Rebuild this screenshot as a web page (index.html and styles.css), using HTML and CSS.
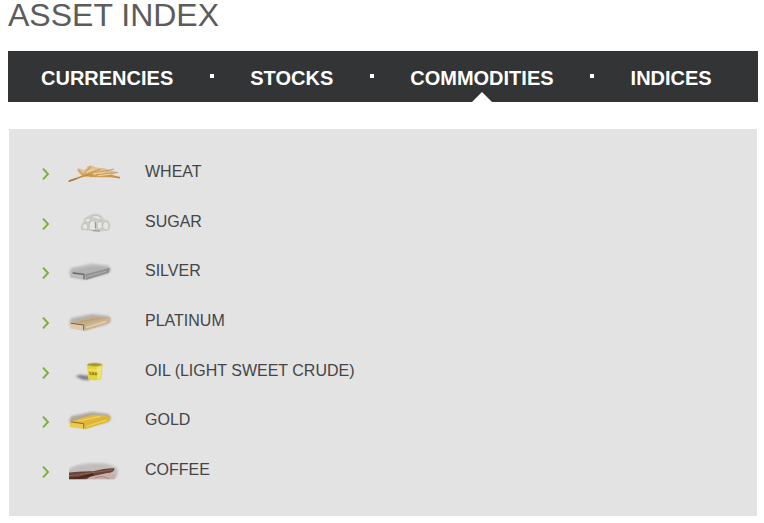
FILE: index.html
```html
<!DOCTYPE html>
<html lang="en">
<head>
<meta charset="utf-8">
<meta name="viewport" content="width=device-width, initial-scale=1">
<title>Asset Index</title>
<link rel="stylesheet" href="styles.css">
</head>
<body>
<svg class="defs" aria-hidden="true">
  <defs>
    <filter id="soft" x="-20%" y="-40%" width="140%" height="180%"><feGaussianBlur stdDeviation="1.8"/></filter>
    <filter id="shadow" x="-20%" y="-40%" width="140%" height="180%"><feGaussianBlur stdDeviation="3.5"/></filter>
    <symbol id="chevron" viewBox="0 0 8 12"><path d="M1 .6L6 6l-5 5.4" fill="none" stroke="#7fb03f" stroke-width="2"/></symbol>
  </defs>
</svg>
<h1 class="title">ASSET INDEX</h1>
<nav class="tabs" aria-label="Asset classes">
  <a class="tab" href="#currencies">CURRENCIES</a>
  <span class="dot"></span>
  <a class="tab" href="#stocks">STOCKS</a>
  <span class="dot"></span>
  <a class="tab tab-active" href="#commodities" aria-current="page">COMMODITIES</a>
  <span class="dot"></span>
  <a class="tab" href="#indices">INDICES</a>
</nav>
<ul class="assets" id="commodities">
  <li class="asset">
    <svg class="chevron"><use href="#chevron"/></svg>
    <svg class="picture" viewBox="114 14 168 72">
      <g filter="url(#soft)" fill="none" stroke-linecap="round">
        <path d="M156 62Q142 52 141 40Q152 38 160 44Q168 42 174 32Q184 28 192 34Q202 38 222 38L236 44L262 50L246 56L266 66L215 66L170 66Z" fill="#dcb984" opacity=".85"/>
        <path d="M118 77L160 62Q200 52 268 67" stroke="#bd8c42" stroke-width="5"/>
        <path d="M160 58L182 34M166 58L210 42M170 58L250 42M174 59L262 52M158 58L146 44M180 63L256 64" stroke="#c8954a" stroke-width="4" opacity=".8"/>
        <path d="M170 50L190 42M190 56L225 51M205 61L240 57" stroke="#ecd3a5" stroke-width="4"/>
        <path d="M118 77L140 70" stroke="#a87845" stroke-width="4"/>
      </g>
    </svg>
    <a class="name" href="#wheat">WHEAT</a>
  </li>
  <li class="asset">
    <svg class="chevron"><use href="#chevron"/></svg>
    <svg class="picture" viewBox="114 13 168 72">
      <g filter="url(#soft)">
        <path d="M153 73Q149 56 160 50Q160 34 174 32Q184 22 202 24Q218 26 222 41Q238 42 241 58Q243 72 232 75L205 78L180 75Z" fill="#cfcecb"/>
        <g fill="#e6e6e4" stroke="#b5b4af" stroke-width="2">
          <path d="M158 70Q154 54 167 54Q176 58 172 72Z"/>
          <path d="M163 48Q168 34 181 38L179 50Z"/>
          <path d="M184 36Q188 27 203 30Q213 34 213 44L197 39Z"/>
          <path d="M178 72Q174 49 188 44Q202 48 196 74Z"/>
          <path d="M201 54Q208 42 217 52L216 69L203 72Z"/>
          <path d="M219 52Q230 42 237 58Q238 68 229 73L218 68Z"/>
        </g>
        <path d="M196 50V67M188 75L210 76" stroke="#8f8e86" stroke-width="3"/>
      </g>
    </svg>
    <a class="name" href="#sugar">SUGAR</a>
  </li>
  <li class="asset">
    <svg class="chevron"><use href="#chevron"/></svg>
    <svg class="picture" viewBox="114 12 168 72">
      <path d="M118 50L124 39L186 26L236 32L244 46L232 57L165 74L122 65Z" fill="#a2a2a2" opacity=".65" filter="url(#shadow)"/>
      <g filter="url(#soft)">
        <path d="M124 52L188 35L238 38L166 58Z" fill="#b2b2b2"/>
        <path d="M122 53L166 58L168 75L120 67Z" fill="#bcbcbc"/>
        <path d="M166 58L240 38L237 53L168 75Z" fill="#919191"/>
        <path d="M128 54L162 58V73" fill="none" stroke="#666" stroke-width="4"/>
        <path d="M170 65L228 49" stroke="#aaa" stroke-width="4"/>
      </g>
    </svg>
    <a class="name" href="#silver">SILVER</a>
  </li>
  <li class="asset">
    <svg class="chevron"><use href="#chevron"/></svg>
    <svg class="picture" viewBox="114 11 168 72">
      <path d="M118 50L124 39L186 26L236 32L244 46L232 57L165 74L122 65Z" fill="#9e9790" opacity=".65" filter="url(#shadow)"/>
      <g filter="url(#soft)">
        <path d="M124 53L188 34L240 36L164 59Z" fill="#c5ac89"/>
        <path d="M121 54L163 59L164 76L120 69Z" fill="#dfcbac"/>
        <path d="M164 59L242 36L238 53L165 76Z" fill="#cdb48d"/>
        <path d="M123 54L161 59V75" fill="none" stroke="#79613d" stroke-width="3"/>
        <path d="M168 67L228 49" stroke="#e5d3b2" stroke-width="4"/>
        <path d="M150 49L210 39" stroke="#b19570" stroke-width="2"/>
      </g>
    </svg>
    <a class="name" href="#platinum">PLATINUM</a>
  </li>
  <li class="asset">
    <svg class="chevron"><use href="#chevron"/></svg>
    <svg class="picture" viewBox="114 15 168 72">
      <path d="M136 67L152 62L178 66V79L158 77Z" fill="#626875" opacity=".8" filter="url(#shadow)"/>
      <g filter="url(#soft)">
        <path d="M171 31L218 31L214 75Q195 83 175 76Z" fill="#e3d33e"/>
        <path d="M200 38L215 36L212 73L202 77Z" fill="#eee47a"/>
        <ellipse cx="194" cy="32" rx="22" ry="5" fill="#9c9238" stroke="#d1c346" stroke-width="3"/>
        <path d="M173 46Q195 52 215 46" fill="none" stroke="#f2e878" stroke-width="3"/>
        <path d="M178 56L203 58M179 61L202 62" stroke="#8b811f" stroke-width="4" stroke-dasharray="6 2"/>
      </g>
    </svg>
    <a class="name" href="#oil">OIL (LIGHT SWEET CRUDE)</a>
  </li>
  <li class="asset">
    <svg class="chevron"><use href="#chevron"/></svg>
    <svg class="picture" viewBox="114 14 168 72">
      <path d="M118 50L124 39L186 26L236 32L244 46L232 57L165 74L122 65Z" fill="#968d7d" opacity=".7" filter="url(#shadow)"/>
      <g filter="url(#soft)">
        <path d="M124 54L188 34L240 37L164 61Z" fill="#e2b93c"/>
        <path d="M121 56L163 61L165 77L119 71Z" fill="#edcb4b"/>
        <path d="M164 61L242 37L238 54L166 77Z" fill="#dfb62e"/>
        <path d="M123 56L161 61V76" fill="none" stroke="#947117" stroke-width="3"/>
        <path d="M169 69L230 50" stroke="#f0d34d" stroke-width="4"/>
        <path d="M145 53L210 39" stroke="#f2d766" stroke-width="3"/>
      </g>
    </svg>
    <a class="name" href="#gold">GOLD</a>
  </li>
  <li class="asset">
    <svg class="chevron"><use href="#chevron"/></svg>
    <svg class="picture" viewBox="114 13 168 72">
      <clipPath id="coffee-frame"><path d="M117 10H282V77H117Z"/></clipPath>
      <g clip-path="url(#coffee-frame)">
        <path d="M112 50Q134 30 190 29Q246 26 262 46Q268 64 250 80H112Z" fill="#b3adab" opacity=".7" filter="url(#shadow)"/>
        <g filter="url(#soft)">
          <path d="M108 58Q148 52 190 53Q228 43 253 44Q256 55 230 60Q195 68 160 82H108Z" fill="#684437"/>
          <path d="M180 69L235 57L258 64L252 80H166Z" fill="#c9afa9"/>
          <path d="M110 66Q144 66 184 57Q218 54 248 48" fill="none" stroke="#926555" stroke-width="3"/>
          <path d="M108 77Q148 75 190 62" fill="none" stroke="#4a2920" stroke-width="7"/>
          <path d="M194 73Q220 63 240 78" fill="none" stroke="#a88b85" stroke-width="3"/>
        </g>
      </g>
    </svg>
    <a class="name" href="#coffee">COFFEE</a>
  </li>
</ul>
</body>
</html>
```
FILE: styles.css
```css
* {
  box-sizing: border-box;
}

body {
  margin: 0 6px 0 8px;
  background: #fff;
  color: #444547;
  font-family: "Liberation Sans", Arial, sans-serif;
}

a {
  color: inherit;
  text-decoration: none;
}

.defs {
  position: absolute;
  width: 0;
  height: 0;
}

.title {
  margin: 0 0 21px;
  color: #5c5c5c;
  font-size: 32px;
  font-weight: 400;
  line-height: 30px;
}

.tabs {
  display: flex;
  align-items: stretch;
  padding: 0 33px;
  background: #333435;
  color: #fff;
}

.tab {
  position: relative;
  padding-top: 4px;
  font-size: 20px;
  font-weight: 700;
  line-height: 47px;
}

.tab-active::after {
  content: "";
  position: absolute;
  bottom: 0;
  left: 50%;
  margin-left: -10px;
  border: 10px solid transparent;
  border-top: 0;
  border-bottom-color: #fff;
}

.dot {
  display: flex;
  align-items: center;
  justify-content: center;
  width: 77px;
  padding-bottom: 1px;
}

.dot::before {
  content: "";
  width: 4px;
  height: 4px;
  background: #fff;
}

.assets {
  display: grid;
  grid-auto-rows: 1fr;
  min-height: 387px;
  margin: 27px 1px 0;
  padding: 18px 32px 21px;
  background: #e3e3e3;
  list-style: none;
}

.asset {
  display: flex;
  align-items: center;
}

.chevron {
  width: 8px;
  height: 12px;
  margin: 4px 18px 0 1px;
}

.picture {
  width: 56px;
  height: 24px;
  margin-right: 21px;
}

.name {
  font-size: 16px;
  line-height: 20px;
}
```
